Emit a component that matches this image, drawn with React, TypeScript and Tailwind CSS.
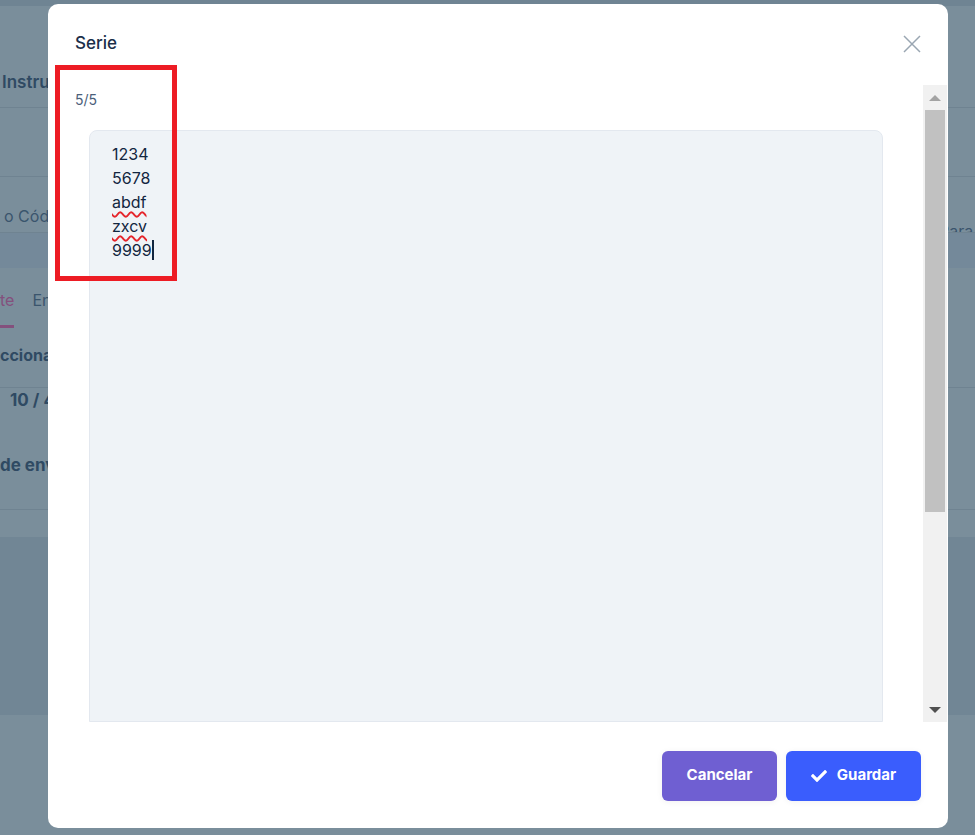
import { FaCheck } from "react-icons/fa";

const lines = [
  { text: "1234", typo: false },
  { text: "5678", typo: false },
  { text: "abdf", typo: true },
  { text: "zxcv", typo: true },
];

const BackgroundPage = () => {
  return (
    <div className="flex flex-col w-full h-full text-[16px] text-[#3a556d]">
      <div className="h-[6px] bg-[#6f8493]"></div>
      <div className="h-[102px] flex items-end pl-[2px] pb-[12px] border-b border-[#6f8391]">
        <span className="font-semibold text-[17px] text-[#2f4a63]">Instrucciones</span>
      </div>
      <div className="h-[69px] border-b border-[#6f8391]"></div>
      <div className="h-[55px] flex items-start">
        <span className="w-[939px] pl-[4px] mt-[27px] leading-[24px]">o Código de barras</span>
        <span className="flex-1 mt-[42px] leading-[24px] whitespace-nowrap overflow-hidden">Para el</span>
      </div>
      <div className="h-[36px] bg-[#74899a] border-t border-[#6f8391]"></div>
      <div className="h-[60px] flex items-end gap-[18px]">
        <span className="pb-[13px] leading-[24px] border-b-[3px] border-[#84507d] text-[#84507d]">te</span>
        <span className="pb-[16px] leading-[24px]">Enviados</span>
      </div>
      <div className="h-[60px] pt-[15px] border-b border-[#6f8391]">
        <span className="font-bold text-[#2f4a63] leading-[24px]">ccionar</span>
      </div>
      <div className="h-[122px] flex flex-col border-b border-[#6f8391]">
        <span className="pl-[10px] font-bold text-[17px] text-[#2f4a63] leading-[24px]">10 / 40</span>
        <span className="mt-[41px] font-bold text-[17px] text-[#2f4a63] leading-[24px]">de envío</span>
      </div>
      <div className="h-[27px]"></div>
      <div className="h-[178px] bg-[#718695]"></div>
      <div className="flex-1"></div>
    </div>
  );
};

const Scrollbar = () => {
  return (
    <div className="w-[24px] mr-[1px] flex flex-col bg-[#f1f1f1]">
      <div className="h-[25px] flex items-center justify-center">
        <div className="w-0 h-0 border-l-[6px] border-r-[6px] border-b-[6px] border-l-transparent border-r-transparent border-b-[#a3a3a3]"></div>
      </div>
      <div className="h-[402px] mx-[2px] bg-[#c1c1c1]"></div>
      <div className="flex-1"></div>
      <div className="h-[25px] flex items-center justify-center">
        <div className="w-0 h-0 border-l-[6px] border-r-[6px] border-t-[6px] border-l-transparent border-r-transparent border-t-[#505050]"></div>
      </div>
    </div>
  );
};

const SerieModal = () => {
  return (
    <div className="absolute left-[48px] top-[4px] w-[900px] h-[824px] bg-white rounded-[10px] flex flex-col overflow-hidden">
      <div className="h-[81px] pb-[1px] px-[27px] flex items-center justify-between">
        <h2 className="text-[17px] font-medium text-[#1b2f4a]">Serie</h2>
        <button className="w-[18px] h-[18px] text-[#9aa6b2]">
          <svg width="18" height="18" viewBox="0 0 18 18" fill="none" stroke="currentColor" strokeWidth="1.5">
            <path d="M1 1L17 17M17 1L1 17" />
          </svg>
        </button>
      </div>
      <div className="h-[637px] flex overflow-hidden">
        <div className="flex-1 pl-[27px] pr-[40px] pt-[5px] flex flex-col">
          <p className="text-[14px] leading-[20px] text-[#4a607a]">5/5</p>
          <div className="mt-[20px] ml-[14px] h-[700px] bg-[#eff3f7] border border-[#e3e8ef] rounded-t-[8px] pt-[11px] pl-[22px] text-[16px] leading-[24px] text-[#12263f]">
            {lines.map((line) => (
              <div key={line.text}>
                <span
                  className={
                    line.typo
                      ? "underline decoration-wavy decoration-[#e5242b] decoration-[1.5px] underline-offset-[3px]"
                      : ""
                  }
                >
                  {line.text}
                </span>
              </div>
            ))}
            <div className="flex items-center">
              <span>9999</span>
              <span className="w-[2px] h-[20px] bg-[#12263f]"></span>
            </div>
          </div>
        </div>
        <Scrollbar />
      </div>
      <div className="flex-1 flex items-center justify-end gap-[9px] pr-[27px] pt-[1px]">
        <button className="w-[115px] h-[50px] rounded-[6px] bg-[#6f5fd2] text-white text-[15px] font-bold shadow-[0_1px_6px_rgba(0,0,0,0.06)]">
          Cancelar
        </button>
        <button className="w-[135px] h-[50px] rounded-[6px] bg-[#3a5dfd] text-white text-[15px] font-bold flex items-center justify-center gap-[10px] shadow-[0_1px_6px_rgba(0,0,0,0.06)]">
          <FaCheck className="w-[16px] h-[16px]" />
          Guardar
        </button>
      </div>
    </div>
  );
}

export default function App() {
  return (
    <div className="relative w-[975px] h-[835px] overflow-hidden bg-[#7a8e9b] font-['Inter',sans-serif]">
      <BackgroundPage />
      <SerieModal />
      <div className="absolute left-[55px] top-[65px] w-[122px] h-[216px] border-[5px] border-[#ed1c24]"></div>
    </div>
  );
}
